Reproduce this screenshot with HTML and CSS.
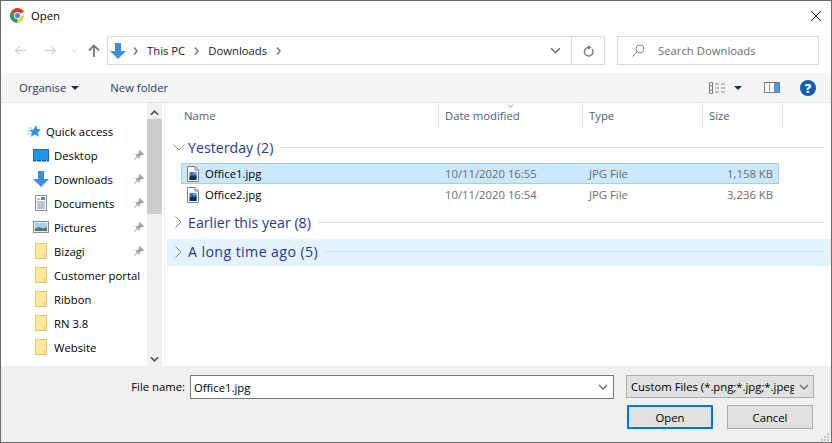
FILE: index.html
```html
<!DOCTYPE html>
<html lang="en">
<head>
  <meta charset="UTF-8">
  <title>Open</title>
  <link rel="stylesheet" href="styles.css">
</head>
<body>
  <svg class="defs" width="0" height="0">
    <symbol id="arrowDown" viewBox="0 0 16 16">
      <path d="M5 0h6v8h5l-8 8-8-8h5z" fill="#3b8ee2"/>
    </symbol>
    <symbol id="folder" viewBox="0 0 12 16">
      <path d="M.5.5h11v15H.5z" fill="#fde9a0" stroke="#e8c65e"/>
      <path d="M9.500 11v4.500" stroke="#e8c65e" fill="none"/>
    </symbol>
    <symbol id="pin" viewBox="0 0 11 11">
      <path d="M6.500 0 11 4.500 9.800 5.300 8.700 4.800 6.800 6.700 6.600 9 2 4.400 4.300 4.200 6.200 2.300 5.700 1.200zM3.500 6.500 0 11l4.500-3.500z" fill="#9aa3aa"/>
    </symbol>
    <symbol id="jpg" viewBox="0 0 12 16">
      <path d="M.5.500h7.500l3.500 3.500v11.500H.5z" fill="#fff" stroke="#7d7d7d"/>
      <path d="M8 .5v3.500h3.500" fill="none" stroke="#7d7d7d"/>
      <rect x="2.500" y="6" width="7" height="8" fill="#2a78c4"/>
      <path d="M2.500 11l2.500-2 2 1.500 2.500-1.500v5h-7z" fill="#0e2f5e"/>
      <rect x="6.500" y="6.500" width="2" height="1.500" fill="#8fcaf0"/>
    </symbol>
    <symbol id="chevSmall" viewBox="0 0 10 6">
      <path d="M1 1l4 4 4-4" fill="none" stroke="#6a6a6a" stroke-width="1.300"/>
    </symbol>
    <symbol id="crumbChev" viewBox="0 0 5 8">
      <path d="M1 .5 4 4 1 7.500" fill="none" stroke="#7a7a7a" stroke-width="1.500"/>
    </symbol>
  </svg>

  <div class="dialog">
    <header class="titleBar">
      <svg class="chrome" viewBox="0 0 16 16" width="15" height="15">
        <path d="M8 8 1.100 4A8 8 0 0 1 14.900 4z" fill="#dc3d32"/>
        <path d="M8 8h6.900A8 8 0 0 1 8 16z" fill="#fbc934"/>
        <path d="M8 8v8A8 8 0 0 1 1.100 4z" fill="#2f9e4f"/>
        <circle cx="8" cy="8" r="3.800" fill="#fff"/>
        <circle cx="8" cy="8" r="2.800" fill="#4a8af0"/>
      </svg>
      <span class="titleText">Open</span>
      <svg class="closeIcon" viewBox="0 0 10 10" width="10" height="10">
        <path d="M0 0l10 10M10 0 0 10" stroke="#111" stroke-width="1" fill="none"/>
      </svg>
    </header>

    <div class="navBar">
      <svg class="navBtn" viewBox="0 0 14 12" width="13" height="11">
        <path d="M13 6H2M6 1.500 1.500 6 6 10.500" stroke="#d4d4d4" stroke-width="1.500" fill="none"/>
      </svg>
      <svg class="navBtn forward" viewBox="0 0 14 12" width="13" height="11">
        <path d="M1 6h11M8 1.500 12.500 6 8 10.500" stroke="#d4d4d4" stroke-width="1.500" fill="none"/>
      </svg>
      <svg class="navDrop" width="7" height="5"><use href="#chevSmall" opacity=".25"/></svg>
      <svg class="navUp" viewBox="0 0 12 13" width="12" height="13">
        <path d="M6 13V2M1 6.500 6 1.500l5 5" stroke="#7b7b7b" stroke-width="1.800" fill="none"/>
      </svg>
      <div class="addressBox">
        <svg class="addressIcon" width="16" height="16"><use href="#arrowDown"/></svg>
        <svg class="crumbSep" width="5" height="8"><use href="#crumbChev"/></svg>
        <span class="crumb">This PC</span>
        <svg class="crumbSep" width="5" height="8"><use href="#crumbChev"/></svg>
        <span class="crumb">Downloads</span>
        <svg class="crumbSep" width="5" height="8"><use href="#crumbChev"/></svg>
        <span class="addressFill"></span>
        <svg class="addressChev" width="11" height="7"><use href="#chevSmall"/></svg>
        <span class="refresh">
          <svg viewBox="0 0 12 13" width="11" height="12">
            <path d="M9.800 4.200A4.700 4.700 0 1 1 6 2.600" stroke="#7b7b7b" stroke-width="1.500" fill="none"/>
            <path d="M5.500 0v5.200L9 2.600z" fill="#7b7b7b"/>
          </svg>
        </span>
      </div>
      <div class="searchBox">
        <svg viewBox="0 0 13 13" width="13" height="13">
          <circle cx="8" cy="5" r="4" stroke="#8a8a8a" fill="none"/>
          <path d="M5 8 .5 12.500" stroke="#b06f8c" fill="none"/>
        </svg>
        <span>Search Downloads</span>
      </div>
    </div>

    <div class="toolBar">
      <span class="toolBtn">Organise</span>
      <span class="caret"></span>
      <span class="toolBtn newFolder">New folder</span>
      <span class="toolFill"></span>
      <svg class="viewIcon" viewBox="0 0 16 12" width="16" height="12">
        <path d="M.5.500h3v11h-3zM.5 4h3M.5 8h3" stroke="#7d7d7d" fill="#fff"/>
        <path d="M6 2h4M12 2h4M6 6h4M12 6h4M6 10h4M12 10h4" stroke="#8d8d8d"/>
      </svg>
      <span class="caret viewCaret"></span>
      <svg class="paneIcon" viewBox="0 0 16 11" width="16" height="11">
        <rect x=".5" y=".5" width="15" height="10" fill="#fff" stroke="#7d7d7d"/>
        <rect x="10" y="1" width="5" height="9" fill="#4a9ae0"/>
        <path d="M5.500 1v9" stroke="#9a9a9a"/>
      </svg>
      <span class="helpIcon">?</span>
    </div>

    <div class="content">
      <nav class="sidebar">
        <ul class="tree">
          <li class="treeRow quick">
            <svg class="quickIcon" viewBox="0 0 14 12" width="14" height="12">
              <path d="M9 0l1.200 4L14 4.600l-3 2.600.8 4.500L8 9.600 3.800 11.800l1-4.500L2.500 5l4-.5z" fill="#2f93e6"/>
              <path d="M1 3h4M0 6h3M0 9h3" stroke="#8cc4ee"/>
            </svg>
            <span>Quick access</span>
          </li>
          <li class="treeRow">
            <svg class="treeIcon" viewBox="0 0 16 13" width="16" height="13">
              <rect x=".5" y=".5" width="15" height="11" fill="#1f96ec" stroke="#0b6cbd"/>
              <rect y="11" width="16" height="1.500" fill="#0b5fa8"/>
              <path d="M3 11.700h1M8 11.700h1M13 11.700h1" stroke="#fff" stroke-width=".8"/>
            </svg>
            <span class="treeLabel">Desktop</span>
            <svg class="pin" width="11" height="11"><use href="#pin"/></svg>
          </li>
          <li class="treeRow">
            <svg class="treeIcon" width="16" height="16"><use href="#arrowDown"/></svg>
            <span class="treeLabel">Downloads</span>
            <svg class="pin" width="11" height="11"><use href="#pin"/></svg>
          </li>
          <li class="treeRow">
            <svg class="treeIcon" viewBox="0 0 16 16" width="16" height="16">
              <path d="M2.500.5h11v15h-11z" fill="#fff" stroke="#8a8a8a"/>
              <path d="M4 4h3M4 7h8M4 9h8M4 11h8M4 13h8" stroke="#6f8fb0"/>
              <path d="M8 2h4v3H8z" fill="#3b8ee2"/>
            </svg>
            <span class="treeLabel">Documents</span>
            <svg class="pin" width="11" height="11"><use href="#pin"/></svg>
          </li>
          <li class="treeRow">
            <svg class="treeIcon" viewBox="0 0 16 12" width="16" height="12">
              <rect x=".5" y=".5" width="15" height="11" fill="#dfeaf2" stroke="#8a8a8a"/>
              <path d="M2 7l4-1 4 1 4-1v4H2z" fill="#4e7f6a"/>
              <rect x="2" y="2" width="12" height="4" fill="#a8cfe8"/>
            </svg>
            <span class="treeLabel">Pictures</span>
            <svg class="pin" width="11" height="11"><use href="#pin"/></svg>
          </li>
          <li class="treeRow">
            <svg class="folderIcon" width="12" height="16"><use href="#folder"/></svg>
            <span class="treeLabel">Bizagi</span>
            <svg class="pin" width="11" height="11"><use href="#pin"/></svg>
          </li>
          <li class="treeRow">
            <svg class="folderIcon" width="12" height="16"><use href="#folder"/></svg>
            <span class="treeLabel">Customer portal</span>
          </li>
          <li class="treeRow">
            <svg class="folderIcon" width="12" height="16"><use href="#folder"/></svg>
            <span class="treeLabel">Ribbon</span>
          </li>
          <li class="treeRow">
            <svg class="folderIcon" width="12" height="16"><use href="#folder"/></svg>
            <span class="treeLabel">RN 3.8</span>
          </li>
          <li class="treeRow">
            <svg class="folderIcon" width="12" height="16"><use href="#folder"/></svg>
            <span class="treeLabel">Website</span>
          </li>
        </ul>
      </nav>

      <div class="scrollbar">
        <svg viewBox="0 0 10 6" width="9" height="6"><path d="M1 5l4-4 4 4" fill="none" stroke="#505050" stroke-width="1.800"/></svg>
        <div class="scrollThumb"></div>
        <span class="scrollFill"></span>
        <svg viewBox="0 0 10 6" width="9" height="6"><path d="M1 1l4 4 4-4" fill="none" stroke="#505050" stroke-width="1.800"/></svg>
      </div>

      <main class="files">
        <div class="columns">
          <div class="col colName">Name</div>
          <div class="col colDate">Date modified
            <svg class="sortMark" viewBox="0 0 10 6" width="7" height="4"><path d="M1 1l4 4 4-4" fill="none" stroke="#8a8a8a" stroke-width="1.300"/></svg>
          </div>
          <div class="col colType">Type</div>
          <div class="col colSize">Size</div>
        </div>

        <div class="group first">
          <svg class="groupChev" viewBox="0 0 12 7" width="12" height="7"><path d="M.5.500 6 6 11.500.5" fill="none" stroke="#8a8a8a"/></svg>
          <span class="groupName">Yesterday (2)</span>
          <span class="groupLine"></span>
        </div>
        <div class="fileRow selected">
          <svg class="fileIcon" width="12" height="16"><use href="#jpg"/></svg>
          <span class="fileName">Office1.jpg</span>
          <span class="fileDate">10/11/2020 16:55</span>
          <span class="fileType">JPG File</span>
          <span class="fileSize">1,158 KB</span>
        </div>
        <div class="fileRow">
          <svg class="fileIcon" width="12" height="16"><use href="#jpg"/></svg>
          <span class="fileName">Office2.jpg</span>
          <span class="fileDate">10/11/2020 16:54</span>
          <span class="fileType">JPG File</span>
          <span class="fileSize">3,236 KB</span>
        </div>
        <div class="group">
          <svg class="groupChev closed" viewBox="0 0 7 12" width="7" height="12"><path d="M.5.500 6 6 .5 11.500" fill="none" stroke="#8a8a8a"/></svg>
          <span class="groupName">Earlier this year (8)</span>
          <span class="groupLine"></span>
        </div>
        <div class="group hovered">
          <svg class="groupChev closed" viewBox="0 0 7 12" width="7" height="12"><path d="M.5.500 6 6 .5 11.500" fill="none" stroke="#8a8a8a"/></svg>
          <span class="groupName">A long time ago (5)</span>
          <span class="groupLine"></span>
        </div>
      </main>
    </div>

    <footer class="bottom">
      <div class="bottomRow">
        <label class="fileLabel">File name:</label>
        <div class="nameInput">
          <span>Office1.jpg</span>
          <svg width="10" height="6"><use href="#chevSmall"/></svg>
        </div>
        <div class="typeSelect">
          <span class="typeText">Custom Files (*.png;*.jpg;*.jpeg</span>
          <svg width="10" height="6"><use href="#chevSmall"/></svg>
        </div>
      </div>
      <div class="buttonRow">
        <button class="btn primary">Open</button>
        <button class="btn">Cancel</button>
      </div>
      <svg class="grip" viewBox="0 0 8 8" width="8" height="8">
        <path d="M6 0h2v2H6zM3 3h2v2H3zM6 3h2v2H6zM0 6h2v2H0zM3 6h2v2H3zM6 6h2v2H6z" fill="#c4c4c4"/>
      </svg>
    </footer>
  </div>
</body>
</html>
```

FILE: styles.css
```css
html, body {
  padding: 0;
  margin: 0;
  background-color: #ffffff;
  overflow: hidden;
}

ul {
  list-style: none;
  margin: 0;
  padding: 0;
}

.defs {
  position: absolute;
}

.dialog {
  position: relative;
  width: 832px;
  height: 443px;
  box-sizing: border-box;
  border: 1px solid #6b6b6b;
  display: flex;
  flex-direction: column;
  font-family: "Open Sans", "Noto Sans", sans-serif;
  font-size: 11.3px;
  color: #000000;
}

/* title bar */
.titleBar {
  height: 29px;
  flex: none;
  display: flex;
  align-items: center;
  padding-left: 9px;
}

.titleText {
  margin-left: 6px;
}

.closeIcon {
  margin-left: auto;
  margin-right: 10px;
}

/* address bar */
.navBar {
  height: 43px;
  flex: none;
  box-sizing: border-box;
  padding-bottom: 2px;
  display: flex;
  align-items: center;
}

.navBtn {
  margin-left: 13px;
}

.navBtn.forward {
  margin-left: 17px;
}

.navDrop {
  margin-left: 14px;
}

.navUp {
  margin-left: 10px;
}

.addressBox {
  margin-left: 7px;
  width: 498px;
  height: 29px;
  box-sizing: border-box;
  border: 1px solid #d9d9d9;
  display: flex;
  align-items: center;
  padding-left: 2px;
}

.crumb {
  margin: 0 9px;
  color: #1a1a1a;
}

.addressIcon {
  margin-right: 7px;
}

.addressFill {
  flex: 1;
}

.addressChev {
  margin-right: 10px;
}

.refresh {
  width: 32px;
  height: 100%;
  border-left: 1px solid #d9d9d9;
  display: flex;
  align-items: center;
  justify-content: center;
}

.searchBox {
  margin-left: 12px;
  width: 202px;
  height: 29px;
  box-sizing: border-box;
  border: 1px solid #d9d9d9;
  display: flex;
  align-items: center;
  padding-left: 14px;
  color: #6d6d6d;
}

.searchBox span {
  margin-left: 13px;
}

/* command bar */
.toolBar {
  height: 30px;
  flex: none;
  box-sizing: border-box;
  background-color: #f4f5f7;
  border-bottom: 1px solid #e5e5e5;
  display: flex;
  align-items: center;
  padding-left: 18px;
}

.toolBtn {
  color: #2b3a55;
}

.newFolder {
  margin-left: 31px;
}

.caret {
  width: 0;
  height: 0;
  margin-left: 5px;
  border-left: 4px solid transparent;
  border-right: 4px solid transparent;
  border-top: 4px solid #1c2f52;
}

.toolFill {
  flex: 1;
}

.viewCaret {
  margin-left: 9px;
}

.paneIcon {
  margin-left: 22px;
}

.helpIcon {
  width: 16px;
  height: 16px;
  margin-left: 20px;
  margin-right: 15px;
  border-radius: 50%;
  background-color: #0a5fb4;
  color: #ffffff;
  font-weight: 800;
  font-size: 13px;
  line-height: 16px;
  text-align: center;
}

/* main area */
.content {
  flex: 1;
  min-height: 0;
  display: flex;
}

.sidebar {
  width: 146px;
  flex: none;
  padding-top: 16px;
  overflow: hidden;
}

.treeRow {
  height: 24px;
  display: flex;
  align-items: center;
  position: relative;
  padding-left: 32px;
  white-space: nowrap;
}

.treeRow.quick {
  padding-left: 26px;
}

.quick span {
  margin-left: 5px;
}

.treeIcon {
  flex: none;
}

.folderIcon {
  flex: none;
  margin-left: 2px;
}

.treeLabel {
  position: absolute;
  left: 53px;
}

.pin {
  position: absolute;
  left: 132px;
}

.scrollbar {
  width: 15px;
  flex: none;
  background-color: #f0f0f0;
  display: flex;
  flex-direction: column;
  align-items: center;
  padding-top: 7px;
  padding-bottom: 4px;
  box-sizing: border-box;
}

.scrollThumb {
  width: 100%;
  height: 95px;
  margin-top: 3px;
  background-color: #cdcdcd;
}

.scrollFill {
  flex: 1;
}

.files {
  flex: 1;
  min-width: 0;
  margin-left: 2px;
  border-left: 1px solid #f0f0f0;
}

.columns {
  height: 26px;
  display: flex;
  margin-left: 13px;
  color: #4c607a;
}

.col {
  box-sizing: border-box;
  border-right: 1px solid #e5e5e5;
  padding: 5px 0 0 6px;
  position: relative;
}

.colName {
  width: 261px;
}

.colDate {
  width: 144px;
}

.colType {
  width: 120px;
}

.colSize {
  width: 80px;
}

.sortMark {
  position: absolute;
  left: 68px;
  top: 1px;
}

.group {
  height: 24px;
  display: flex;
  align-items: center;
  margin-top: 5px;
  padding-left: 5px;
  padding-right: 7px;
  color: #1f3a93;
  font-size: 14.2px;
}

.group.first {
  margin-top: 6px;
  margin-bottom: 4px;
}

.group.hovered {
  height: 27px;
  box-sizing: border-box;
  padding-bottom: 2px;
  background-color: #e5f3ff;
  margin-left: 2px;
  padding-left: 3px;
}

.groupChev {
  flex: none;
  margin: 0 3px 0 3px;
}

.groupChev.closed {
  margin: 0 6px 0 5px;
}

.groupName {
  white-space: nowrap;
}

.hovered .groupName {
  letter-spacing: 0.4px;
}

.groupLine {
  flex: 1;
  height: 1px;
  margin-left: 7px;
  background-color: #e2e2e2;
}

.hovered .groupLine {
  background-color: #cfdbe8;
}

.fileRow {
  width: 598px;
  height: 21px;
  box-sizing: border-box;
  margin-left: 16px;
  border: 1px solid transparent;
  display: flex;
  align-items: center;
  white-space: nowrap;
  color: #6d6d6d;
}

.fileRow.selected {
  background-color: #cce8ff;
  border-color: #99d1ff;
}

.fileIcon {
  flex: none;
  margin-left: 5px;
}

.fileName {
  width: 240px;
  margin-left: 6px;
  color: #000000;
}

.fileDate {
  width: 144px;
}

.fileType {
  width: 120px;
}

.fileSize {
  width: 64px;
  text-align: right;
}

/* bottom panel */
.bottom {
  height: 76px;
  flex: none;
  background-color: #f0f0f0;
  position: relative;
  padding-top: 9px;
  box-sizing: border-box;
}

.bottomRow {
  display: flex;
  align-items: flex-start;
}

.fileLabel {
  width: 189px;
  box-sizing: border-box;
  padding-right: 5px;
  line-height: 24px;
  text-align: right;
}

.nameInput {
  width: 424px;
  height: 24px;
  box-sizing: border-box;
  background-color: #ffffff;
  border: 1px solid #7a7a7a;
  display: flex;
  align-items: center;
  justify-content: space-between;
  padding: 0 5px 0 3px;
}

.typeSelect {
  width: 188px;
  height: 23px;
  margin-left: 12px;
  box-sizing: border-box;
  background-color: #e1e1e1;
  border: 1px solid #adadad;
  display: flex;
  align-items: center;
  justify-content: space-between;
  padding: 0 4px 0 4px;
}

.typeText {
  width: 163px;
  overflow: hidden;
  white-space: nowrap;
}

.buttonRow {
  display: flex;
  margin-top: 6px;
  margin-left: 626px;
  gap: 14px;
}

.btn {
  width: 86px;
  height: 24px;
  padding: 0;
  box-sizing: border-box;
  background-color: #e1e1e1;
  border: 1px solid #adadad;
  font-family: inherit;
  font-size: 11.3px;
  color: #000000;
}

.btn.primary {
  border: 2px solid #0078d7;
}

.grip {
  position: absolute;
  right: 2px;
  bottom: 1px;
}
```
